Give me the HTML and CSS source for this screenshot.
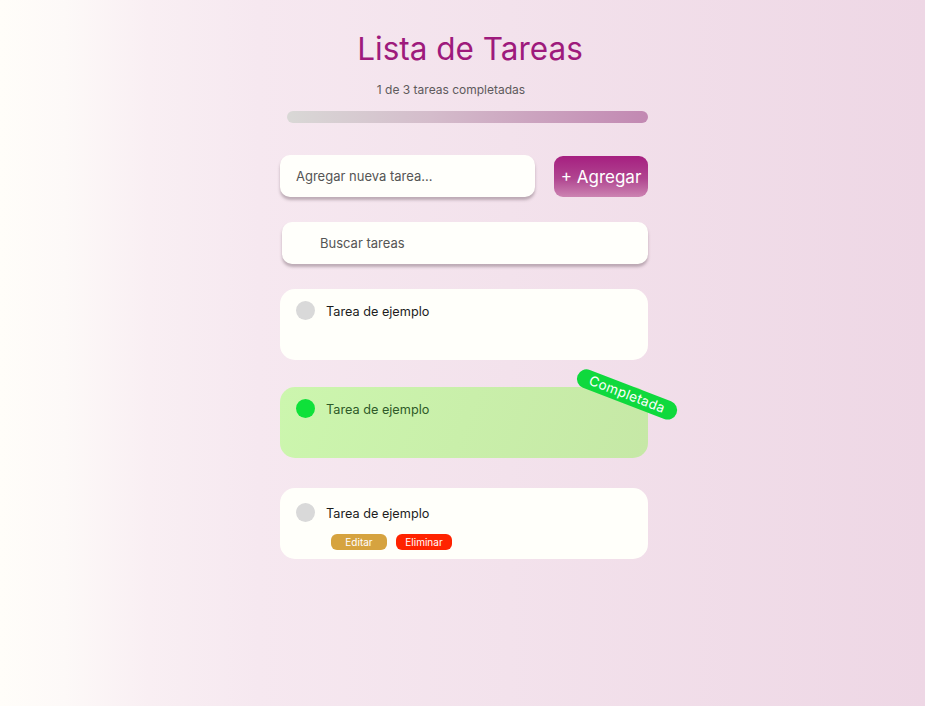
FILE: index.html
```html
<!DOCTYPE html>
<html lang="es">
<head>
    <meta charset="UTF-8">
    <meta name="viewport" content="width=device-width, initial-scale=1.0">
    <title>Lista de Tareas</title>
    <link rel="stylesheet" href="styles.css">
</head>
<body>
    <div class="app">
        <h1 class="title">Lista de Tareas</h1>
        <p class="counter">1 de 3 tareas completadas</p>
        <div class="progress"></div>

        <div class="add-row">
            <input type="text" class="new-task" placeholder="Agregar nueva tarea...">
            <button class="add-btn">+ Agregar</button>
        </div>

        <input type="text" class="search" placeholder="Buscar tareas">

        <ul class="task-list">
            <li class="task">
                <div class="task-row">
                    <span class="check"></span>
                    <span class="task-text">Tarea de ejemplo</span>
                </div>
            </li>
            <li class="task done">
                <div class="task-row">
                    <span class="check"></span>
                    <span class="task-text">Tarea de ejemplo</span>
                </div>
                <span class="badge">Completada</span>
            </li>
            <li class="task editing">
                <div class="task-row">
                    <span class="check"></span>
                    <span class="task-text">Tarea de ejemplo</span>
                </div>
                <div class="actions">
                    <button class="edit">Editar</button>
                    <button class="delete">Eliminar</button>
                </div>
            </li>
        </ul>
    </div>
</body>
</html>
```

FILE: styles.css
```css
*{
    box-sizing: border-box;
}
body{
    margin: 0;
    min-height: 706px;
    font-family: Inter, "Noto Sans", sans-serif;
    background: linear-gradient(90deg, #fffdf9 0%, #fdf9f8 7%, #f9eff3 16%, #f6e8f0 28%, #f3e2ec 55%, #eed7e5 100%);
}
.app{
    width: 368px;
    margin: 0 auto;
    padding-top: 29px;
    position: relative;
    left: 1.5px;
    display: flex;
    flex-direction: column;
}
.title{
    margin: 0;
    text-align: center;
    font-size: 31.5px;
    font-weight: 400;
    color: #9e1a7c;
    line-height: 40px;
    padding-left: 12px;
}
.counter{
    margin: 13px 0 0;
    text-align: center;
    font-size: 12px;
    line-height: 16px;
    color: #5e5a5c;
    padding-right: 26px;
}
.progress{
    margin: 13px 0 0 7px;
    height: 12px;
    border-radius: 6px;
    background: linear-gradient(90deg, #d9d8d6, #d4bccb 40%, #c288b2);
}
.add-row{
    display: flex;
    align-items: center;
    justify-content: space-between;
    margin-top: 31px;
}
.new-task,
.search{
    height: 42px;
    border: none;
    border-radius: 10px;
    background: #fffffb;
    font-family: inherit;
    font-size: 13px;
    color: #333;
    outline: none;
    box-shadow: 0 3px 3px rgba(120, 100, 110, .45);
}
.new-task{
    width: 255px;
    padding-left: 16px;
}
.new-task::placeholder,
.search::placeholder{
    color: #555;
}
.add-btn{
    width: 94px;
    height: 41px;
    margin-top: 2px;
    border: none;
    border-radius: 9px;
    background: linear-gradient(180deg, #a61f80 0%, #b04590 55%, #cc84b2 100%);
    color: #fff;
    font-family: inherit;
    font-size: 17px;
    padding: 0;
}
.search{
    margin: 25px 0 0 2px;
    padding-left: 38px;
    width: 366px;
}
.task-list{
    list-style: none;
    margin: 25px 0 0;
    padding: 0;
    display: flex;
    flex-direction: column;
    gap: 27px;
}
.task{
    position: relative;
    height: 71px;
    padding: 12px 16px;
    border-radius: 15px;
    background: #fffffa;
}
.task.editing{
    margin-top: 3px;
    padding-top: 15px;
}
.task-row{
    display: flex;
    align-items: center;
    gap: 11px;
}
.check{
    width: 19px;
    height: 19px;
    border-radius: 50%;
    background: #d9d9d9;
}
.task-text{
    font-size: 12.7px;
    color: #1d1d1d;
    padding-top: 2px;
}
.task.done{
    background: linear-gradient(110deg, #ccf6ae, #c6e8a6);
}
.task.done .check{
    background: #0fe13a;
}
.task.done .task-text{
    color: #2e5a28;
}
.badge{
    position: absolute;
    right: -32px;
    top: -2px;
    transform: rotate(21deg);
    background: #0fd93d;
    color: #fff;
    font-size: 13.5px;
    line-height: 19px;
    padding: 0 13px;
    border-radius: 10px;
    letter-spacing: .3px;
}
.actions{
    display: flex;
    gap: 9px;
    margin: 12px 0 0 35px;
}
.actions button{
    width: 56px;
    height: 16px;
    border: none;
    border-radius: 6px;
    color: #fff;
    font-family: inherit;
    font-size: 10px;
    padding: 0;
}
.edit{
    background: #d6a33f;
}
.delete{
    background: #ff2300;
}
```
